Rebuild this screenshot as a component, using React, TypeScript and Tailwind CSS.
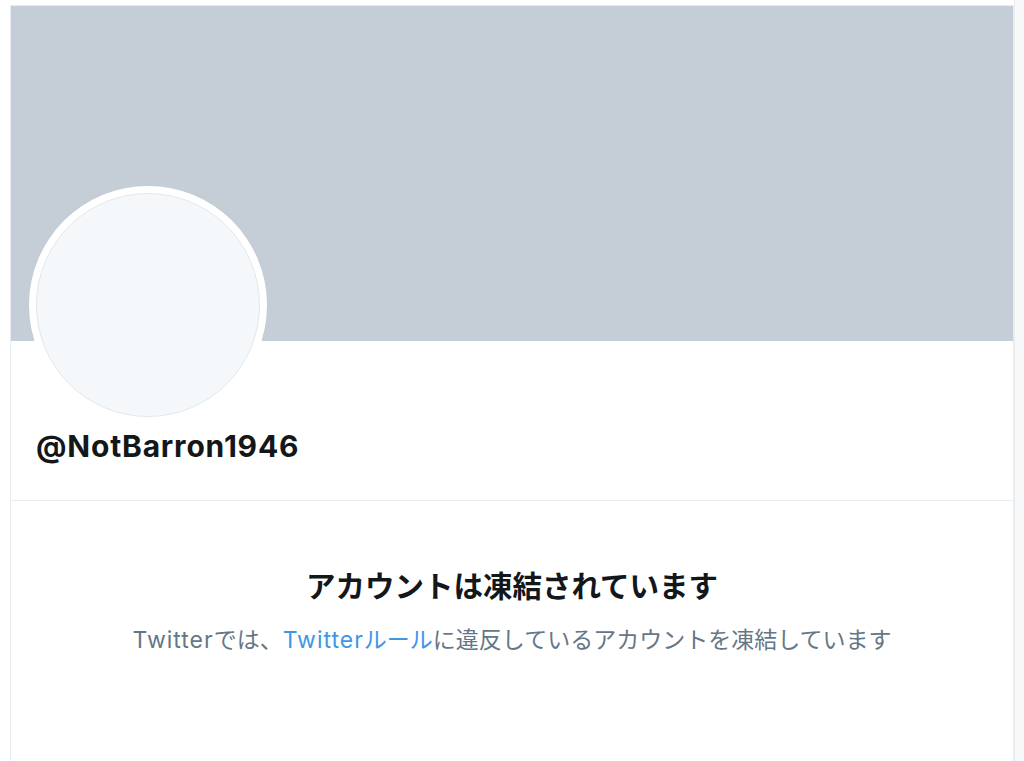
import React from "react";

const font = {
  fontFamily: '"Inter", "Noto Sans CJK JP", sans-serif',
};

export default function App() {
  return (
    <div className="flex min-h-[761px] w-[1024px] bg-white" style={font}>
      {/* left gutter */}
      <div className="w-[10px] shrink-0 bg-white" />

      {/* profile column */}
      <div className="mt-[5px] flex w-[1004px] shrink-0 flex-col border-x border-t border-[#e6ecf0] bg-white">
        {/* banner */}
        <div className="h-[335px] w-full bg-[#c5ced6]" />

        {/* header */}
        <div className="flex flex-col border-b border-[#e6ecf0] px-[18px] pb-[36px]">
          <div className="-mt-[155px] flex h-[238px] w-[238px] items-center justify-center rounded-full bg-white">
            <div className="h-[224px] w-[224px] rounded-full border border-[#e1e8ed] bg-[#f5f8fa]" />
          </div>
          <div className="mt-[5px] pl-[7px] text-[30px] font-bold leading-[35px] tracking-[0.8px] text-[#14171a]">
            @NotBarron1946
          </div>
        </div>

        {/* suspended notice */}
        <div className="flex flex-col items-center pt-[67px] pb-[100px]">
          <h1 className="text-[29.5px] font-bold leading-[36px] text-[#14171a]">
            アカウントは凍結されています
          </h1>
          <p className="mt-[22px] text-[23px] leading-[28px] text-[#657786]">
            <span className="tracking-[1px]">Twitter</span>では、
            <a href="#" className="text-[#3d97e6]">
              <span className="tracking-[1px]">Twitter</span>ルール
            </a>
            に違反しているアカウントを凍結しています
          </p>
        </div>
      </div>

      {/* scrollbar track */}
      <div className="flex-1 border-l border-[#ececec] bg-[#f7f8f9]" />
    </div>
  );
}
